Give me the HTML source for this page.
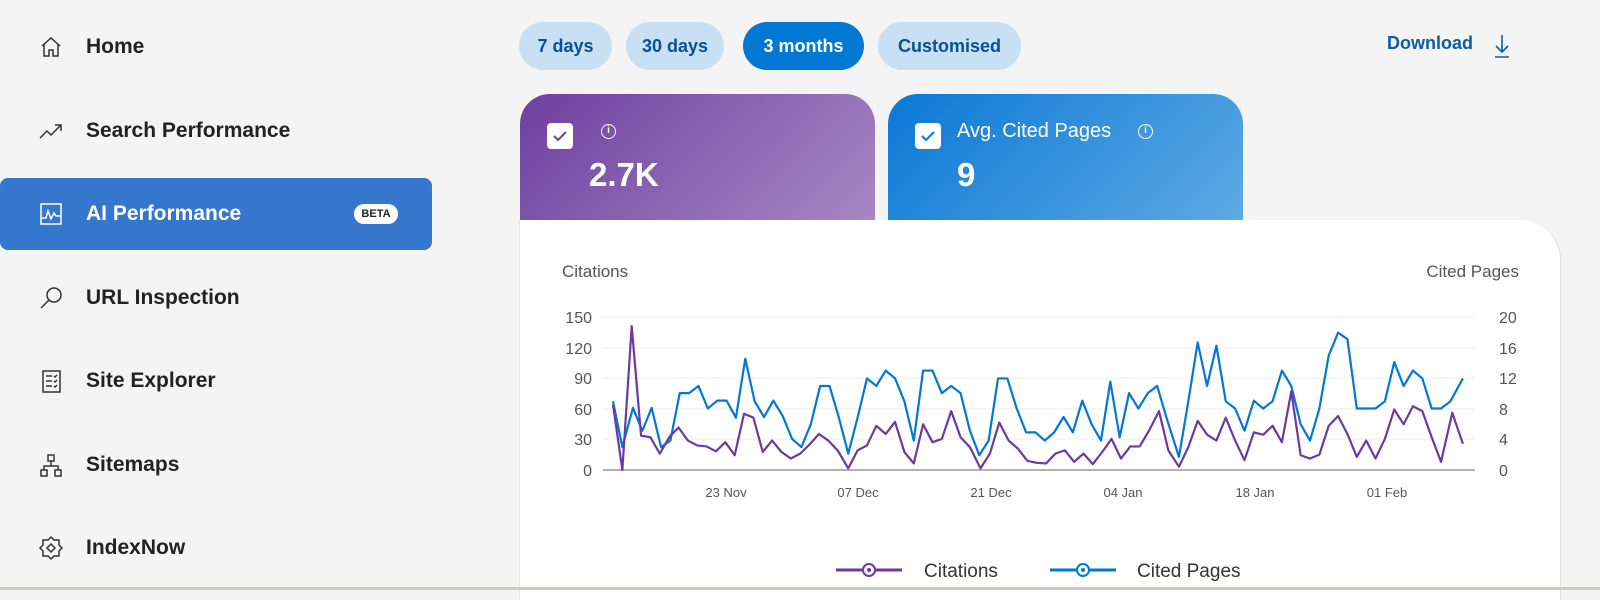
<!DOCTYPE html>
<html><head><meta charset="utf-8"><style>
*{margin:0;padding:0;box-sizing:border-box}
body{width:1600px;height:590px;overflow:hidden;background:#f4f4f4;font-family:"Segoe UI","Liberation Sans",sans-serif;position:relative}
.nav{position:absolute;left:0;width:432px;height:72px;display:flex;align-items:center;font-size:21px;font-weight:600;color:#222}
.nav svg{position:absolute;left:38px;width:26px;height:26px;fill:none;stroke:#333;stroke-width:1.5}
.nav span{position:absolute;left:86px}
.active{background:#3477cc;border-radius:8px;color:#fff}
.active svg{stroke:#fff}
.beta{position:absolute;left:354px;top:26px;width:44px;height:20px;background:#fff;color:#222;border-radius:10px;font-size:11px;font-weight:700;text-align:center;line-height:20px}
.pill{position:absolute;top:22px;height:48px;border-radius:24px;background:#c7e0f4;color:#0b4f94;font-weight:700;font-size:18px;line-height:48px;text-align:center}
.card{position:absolute;top:94px;height:126px;border-radius:30px 30px 0 0;color:#fff}
.chk{position:absolute;left:27px;top:29px;width:26px;height:26px;background:#fff;border-radius:4px}
.chk svg{width:26px;height:26px}
.info{position:absolute;width:15px;height:15px;border:1.5px solid #fff;border-radius:50%;font-size:10px;text-align:center;line-height:12px;font-weight:700}
.big{position:absolute;left:69px;top:62px;font-size:33px;font-weight:700}
.ax{font-family:"Liberation Sans",sans-serif;font-size:16px;fill:#555}
.dx{font-family:"Liberation Sans",sans-serif;font-size:13px;fill:#555}
</style></head><body>

<div class="nav" style="top:11px"><svg viewBox="0 0 26 26"><path d="M4 12 L13 4 L22 12 M6 10 V22 H11 V16 H15 V22 H20 V10"/></svg><span>Home</span></div>
<div class="nav" style="top:95px"><svg viewBox="0 0 26 26"><path d="M2 20 L9 13 L13 17 L23 7 M17 7 H23 V13"/></svg><span>Search Performance</span></div>
<div class="nav active" style="top:178px"><svg viewBox="0 0 26 26"><rect x="3" y="3" width="20" height="20"/><path d="M3 17 L8 17 L10 10 L13 18 L16 12 L18 15 L23 15"/></svg><span>AI Performance</span><div class="beta">BETA</div></div>
<div class="nav" style="top:262px"><svg viewBox="0 0 26 26"><circle cx="16" cy="10" r="7"/><path d="M11 15 L3 23"/></svg><span>URL Inspection</span></div>
<div class="nav" style="top:345px"><svg viewBox="0 0 26 26"><rect x="5" y="3" width="17" height="21"/><path d="M8 8 H14 M8 13 H14 M8 18 H14 M16 8 L17 9 L19 7 M16 13 L17 14 L19 12 M16 18 L17 19 L19 17"/></svg><span>Site Explorer</span></div>
<div class="nav" style="top:429px"><svg viewBox="0 0 26 26"><rect x="10" y="3" width="6" height="6"/><rect x="3" y="18" width="6" height="6"/><rect x="17" y="18" width="6" height="6"/><path d="M13 9 V14 M6 18 V14 H20 V18"/></svg><span>Sitemaps</span></div>
<div class="nav" style="top:512px"><svg viewBox="0 0 26 26"><path d="M13 2 L16 5 L21 5 L21 10 L24 13 L21 16 L21 21 L16 21 L13 24 L10 21 L5 21 L5 16 L2 13 L5 10 L5 5 L10 5 Z"/><path d="M9 13 L13 9 L17 13 L13 17 Z"/></svg><span>IndexNow</span></div>

<div class="pill" style="left:519px;width:93px">7 days</div>
<div class="pill" style="left:626px;width:98px">30 days</div>
<div class="pill" style="left:743px;width:121px;background:#0078d4;color:#fff">3 months</div>
<div class="pill" style="left:878px;width:143px">Customised</div>
<div style="position:absolute;left:1387px;top:33px;font-size:18px;font-weight:600;color:#0b5cab">Download</div>
<svg style="position:absolute;left:1492px;top:33px" width="20" height="26" viewBox="0 0 20 26" fill="none" stroke="#0b5cab" stroke-width="1.6"><path d="M10 2 V19 M4 13 L10 19 L16 13 M3 24 H17"/></svg>

<div class="card" style="left:520px;width:355px;background:linear-gradient(135deg,#6f3fa0,#a688c4)">
<div class="chk"><svg viewBox="0 0 26 26" fill="none" stroke="#6f3fa0" stroke-width="2"><path d="M7 13 L11 17 L19 9"/></svg></div>
<div class="info" style="left:81px;top:30px">i</div>
<div class="big">2.7K</div></div>
<div class="card" style="left:888px;width:355px;background:linear-gradient(135deg,#0a78d6,#5eaae3)">
<div class="chk"><svg viewBox="0 0 26 26" fill="none" stroke="#0a78d6" stroke-width="2"><path d="M7 13 L11 17 L19 9"/></svg></div>
<div style="position:absolute;left:69px;top:26px;font-size:20px">Avg. Cited Pages</div>
<div class="info" style="left:250px;top:30px">i</div>
<div class="big">9</div></div>

<div style="position:absolute;left:519px;top:220px;width:1042px;height:380px;background:#fff;border-radius:0 40px 0 0;border-left:1px solid #e6e6e6;border-right:1px solid #ddd"></div>
<div style="position:absolute;left:0;top:587px;width:1600px;height:3px;background:#c8cbc0"></div>

<svg style="position:absolute;left:0;top:0" width="1600" height="590">
<text x="562" y="277" class="ax" style="font-size:17px">Citations</text>
<text x="1519" y="277" class="ax" text-anchor="end" style="font-size:17px">Cited Pages</text>
<g stroke="#eee" stroke-width="1">
<line x1="603" x2="1475" y1="317" y2="317"/><line x1="603" x2="1475" y1="348" y2="348"/><line x1="603" x2="1475" y1="378" y2="378"/><line x1="603" x2="1475" y1="409" y2="409"/><line x1="603" x2="1475" y1="439" y2="439"/></g>
<line x1="603" x2="1475" y1="470" y2="470" stroke="#999" stroke-width="1.5"/>
<g class="ax" text-anchor="end"><text x="592" y="323">150</text><text x="592" y="354">120</text><text x="592" y="384">90</text><text x="592" y="415">60</text><text x="592" y="445">30</text><text x="592" y="476">0</text></g>
<g class="ax"><text x="1499" y="323">20</text><text x="1499" y="354">16</text><text x="1499" y="384">12</text><text x="1499" y="415">8</text><text x="1499" y="445">4</text><text x="1499" y="476">0</text></g>
<g class="dx" text-anchor="middle"><text x="726" y="497">23 Nov</text><text x="858" y="497">07 Dec</text><text x="991" y="497">21 Dec</text><text x="1123" y="497">04 Jan</text><text x="1255" y="497">18 Jan</text><text x="1387" y="497">01 Feb</text></g>
<g transform="matrix(0.624,0,0,0.327,530,293.4)" fill="none" stroke-width="2.2" stroke-linejoin="round">
<polyline vector-effect="non-scaling-stroke" stroke="#0078d4" points="133,330 148,470 165,350 180,420 195,350 210,470 225,450 240,305 255,305 270,283 285,352 300,328 315,328 330,380 345,200 360,330 375,378 390,328 405,375 420,445 435,470 450,400 465,283 480,283 495,380 510,490 525,380 540,260 555,283 570,236 585,260 600,330 615,450 630,236 645,236 660,305 675,283 690,305 705,420 720,495 735,450 750,260 765,260 780,352 795,425 810,425 825,450 840,425 855,378 870,425 885,328 900,400 915,450 930,270 945,440 960,305 975,352 990,305 1005,283 1020,380 1040,500 1055,330 1070,150 1085,283 1100,160 1115,330 1130,352 1145,420 1160,328 1175,352 1190,330 1205,236 1220,283 1235,400 1250,450 1265,352 1280,190 1295,120 1310,140 1325,352 1340,352 1355,352 1370,330 1385,210 1400,283 1415,236 1430,260 1445,352 1460,352 1475,330 1495,260"/>
<polyline vector-effect="non-scaling-stroke" stroke="#6b3aa0" points="133,340 148,540 163,100 178,435 193,440 208,490 223,440 238,410 253,450 268,465 283,468 298,483 313,455 328,495 343,368 358,380 373,485 388,450 403,485 418,505 433,490 448,462 463,430 478,450 493,480 510,535 525,480 540,465 555,405 570,430 585,393 600,485 615,520 630,400 645,455 660,445 675,360 690,440 705,470 722,535 737,490 752,395 767,450 782,475 797,512 812,518 827,520 842,490 857,480 872,515 887,490 902,522 917,485 932,445 947,505 962,468 977,468 992,420 1008,360 1023,480 1040,530 1055,470 1070,390 1085,432 1100,450 1115,380 1130,450 1145,510 1160,425 1175,432 1190,405 1205,455 1220,300 1235,495 1250,505 1265,493 1280,405 1295,375 1310,430 1325,500 1340,450 1355,505 1370,445 1385,355 1400,400 1415,345 1430,360 1445,440 1460,515 1478,365 1495,460"/>
</g>
<g stroke-width="3" fill="none">
<line x1="836" x2="902" y1="570" y2="570" stroke="#6b3aa0"/><circle cx="869" cy="570" r="6" fill="#fff" stroke="#6b3aa0" stroke-width="2"/><circle cx="869" cy="570" r="2" fill="#6b3aa0" stroke="none"/>
<line x1="1050" x2="1116" y1="570" y2="570" stroke="#0078d4"/><circle cx="1083" cy="570" r="6" fill="#fff" stroke="#0078d4" stroke-width="2"/><circle cx="1083" cy="570" r="2" fill="#0078d4" stroke="none"/>
</g>
<text x="924" y="577" class="ax" style="font-size:19px;fill:#333">Citations</text>
<text x="1137" y="577" class="ax" style="font-size:19px;fill:#333">Cited Pages</text>
</svg>
</body></html>
